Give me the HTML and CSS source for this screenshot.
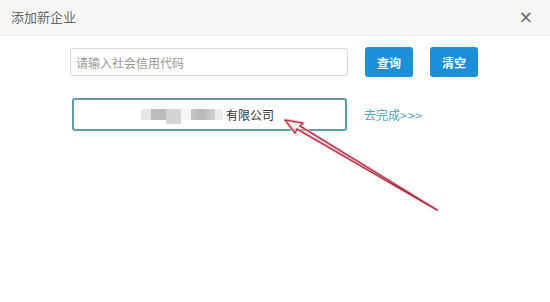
FILE: index.html
```html
<!DOCTYPE html>
<html lang="zh">
<head>
    <meta charset="UTF-8">
    <title>添加新企业</title>
    <link rel="stylesheet" href="styles.css">
</head>
<body>
    <div class="dialog">
        <div class="dialog-head">
            <span class="dialog-title">添加新企业</span>
            <span class="dialog-close">×</span>
        </div>

        <div class="dialog-body">
            <div class="search-row">
                <input class="code-input" type="text" placeholder="请输入社会信用代码">
                <button class="btn">查询</button>
                <button class="btn">清空</button>
            </div>

            <div class="result-row">
                <div class="result-box">
                    <span class="blur">
                        <i class="b1"></i><i class="b2"></i><i class="b3"></i><i class="b4"></i><i class="b5"></i><i class="b6"></i>
                    </span>
                    <span class="result-name">有限公司</span>
                </div>
                <a class="finish-link" href="#">去完成<span class="gt">&gt;&gt;&gt;</span></a>
            </div>
        </div>

        <!-- 标注箭头 -->
        <svg class="mark-arrow" width="550" height="302" viewBox="0 0 550 302">
            <g fill="none" stroke-linejoin="round" stroke-linecap="round">
                <path d="M437 210 L300 126 L303 123 L285 120 L295 133 L297 129 L437 210" stroke="#f3b6bf" stroke-width="3"/>
                <path d="M437 210 L300 126 L303 123 L285 120 L295 133 L297 129 L437 210" stroke="#a8283c" stroke-width="1.1"/>
            </g>
        </svg>
    </div>
</body>
</html>
```

FILE: styles.css
```css
body {
    margin: 0;
    background-color: #fff;
    font-family: "Noto Sans CJK SC", "Liberation Sans", sans-serif;
}

.dialog {
    position: relative;
    width: 550px;
    height: 302px;
    overflow: hidden;
}

.dialog-head {
    height: 35px;
    display: flex;
    align-items: center;
    justify-content: space-between;
    padding: 0 17px 0 11px;
    background-color: #f7f7f7;
    border-bottom: 1px solid #f0f0f0;
}

.dialog-title {
    font-size: 13px;
    color: #666;
    margin-top: -3px;
}

.dialog-close {
    font-family: "DejaVu Sans", sans-serif;
    font-size: 17px;
    color: #666;
    margin-top: -1px;
}

.dialog-body {
    padding: 11px 0 0 70px;
}

.search-row {
    display: flex;
    align-items: center;
    gap: 17px;
}

.code-input {
    width: 278px;
    height: 28px;
    box-sizing: border-box;
    border: 1px solid #dcdcdc;
    border-radius: 2px;
    padding: 0 5px;
    font-family: inherit;
    font-size: 12px;
    color: #333;
    outline: none;
}

.code-input::placeholder {
    color: #9a9a9a;
}

.btn {
    width: 48px;
    height: 30px;
    border: none;
    border-radius: 3px;
    background-color: #1d8ed8;
    color: #fff;
    font-family: inherit;
    font-size: 12px;
    font-weight: bold;
    padding: 0;
}

.result-row {
    display: flex;
    align-items: center;
    gap: 17px;
    margin-top: 21px;
    margin-left: 2px;
}

.result-box {
    width: 275px;
    height: 33px;
    box-sizing: border-box;
    border: 2px solid #5e9ea3;
    border-radius: 3px;
    display: flex;
    align-items: center;
    justify-content: center;
    padding-right: 4px;
}

.blur {
    display: flex;
    align-items: flex-start;
    height: 16px;
    margin-right: 3px;
}

.blur i {
    display: block;
    height: 11px;
    margin-top: 2px;
}

.blur .b1 { width: 10px; background: #e6e6e6; }
.blur .b2 { width: 15px; background: #bcbcbc; }
.blur .b3 { width: 15px; background: #d4d4d4; height: 15px; }
.blur .b4 { width: 10px; background: #f5f5f5; }
.blur .b5 { width: 24px; background: linear-gradient(90deg, #c4c4c4, #b8b8b8 50%, #d2d2d2); }
.blur .b6 { width: 8px; background: #ececec; }

.result-name {
    font-size: 12px;
    color: #333;
}

.finish-link {
    font-size: 12px;
    color: #4ea2c2;
    text-decoration: none;
}

.finish-link .gt {
    letter-spacing: 1px;
}

.mark-arrow {
    position: absolute;
    left: 0;
    top: 0;
}
```
